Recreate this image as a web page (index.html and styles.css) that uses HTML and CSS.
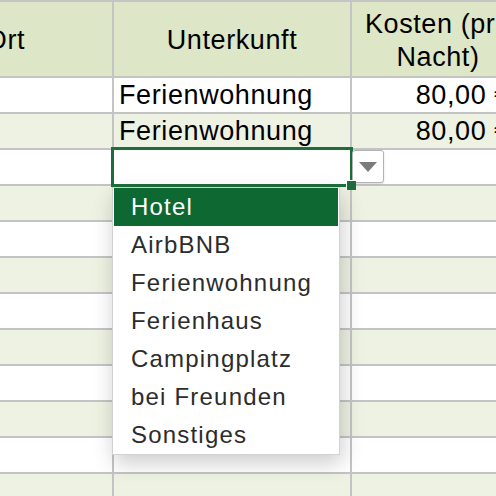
FILE: index.html
```html
<!DOCTYPE html>
<html lang="de">
<head>
<meta charset="utf-8">
<title>Unterkunft</title>
<link rel="stylesheet" href="styles.css">
</head>
<body>
<div class="sheet">
  <div class="cell head">Ort</div>
  <div class="cell head">Unterkunft</div>
  <div class="cell head">Kosten (pro Nacht)</div>

  <div class="cell"></div>
  <div class="cell text">Ferienwohnung</div>
  <div class="cell num">80,00 €</div>

  <div class="cell alt"></div>
  <div class="cell alt text">Ferienwohnung</div>
  <div class="cell alt num">80,00 €</div>

  <div class="cell"></div>
  <div class="cell active">
    <div class="selection"></div>
    <div class="handle"></div>
    <div class="dd-button"><span class="tri"></span></div>
    <ul class="dd-list">
      <li class="dd-item sel">Hotel</li>
      <li class="dd-item">AirbBNB</li>
      <li class="dd-item">Ferienwohnung</li>
      <li class="dd-item">Ferienhaus</li>
      <li class="dd-item">Campingplatz</li>
      <li class="dd-item">bei Freunden</li>
      <li class="dd-item">Sonstiges</li>
    </ul>
  </div>
  <div class="cell"></div>

  <div class="cell alt"></div><div class="cell alt"></div><div class="cell alt"></div>
  <div class="cell"></div><div class="cell"></div><div class="cell"></div>
  <div class="cell alt"></div><div class="cell alt"></div><div class="cell alt"></div>
  <div class="cell"></div><div class="cell"></div><div class="cell"></div>
  <div class="cell alt"></div><div class="cell alt"></div><div class="cell alt"></div>
  <div class="cell"></div><div class="cell"></div><div class="cell"></div>
  <div class="cell alt"></div><div class="cell alt"></div><div class="cell alt"></div>
  <div class="cell"></div><div class="cell"></div><div class="cell"></div>
  <div class="cell alt"></div><div class="cell alt"></div><div class="cell alt"></div>
</div>
</body>
</html>
```
FILE: styles.css
```css
html, body {
  margin: 0;
  padding: 0;
  background: #ffffff;
  overflow: hidden;
  width: 496px;
  height: 496px;
}

.sheet {
  display: grid;
  grid-template-columns: 213px 236px 172px;
  grid-template-rows: 74px;
  grid-auto-rows: 34px;
  gap: 2px;
  padding-top: 2px;
  margin-left: -101px;
  width: 625px;
  background: #c4c4c4;
  font-family: "Liberation Sans", Arial, sans-serif;
  font-size: 27px;
  letter-spacing: 0.6px;
  color: #000000;
}

.cell {
  background: #ffffff;
  line-height: 34px;
  white-space: nowrap;
  overflow: visible;
}

.cell.alt {
  background: #eef2e3;
}

.cell.head {
  background: #dde6c6;
  display: flex;
  align-items: center;
  justify-content: center;
  text-align: center;
  white-space: normal;
  line-height: 33px;
  padding: 3px 0 0;
}

.cell.text {
  padding-left: 5px;
}

.cell.num {
  text-align: right;
  padding-right: 14px;
}

.cell.active {
  position: relative;
  background: #ffffff;
}

.selection {
  position: absolute;
  left: -3px;
  top: -3px;
  width: 236px;
  height: 34px;
  border: 3px solid #1e6e3d;
  z-index: 2;
}

.handle {
  position: absolute;
  left: 232px;
  top: 30px;
  width: 9px;
  height: 9px;
  background: #1e6e3d;
  border-top: 1px solid #ffffff;
  border-left: 1px solid #ffffff;
  z-index: 3;
}

.dd-button {
  position: absolute;
  left: 238px;
  top: 0;
  width: 30px;
  height: 31px;
  background: #ffffff;
  border: 1px solid #b3b3b3;
  border-radius: 3px;
  box-shadow: 0 1px 2px rgba(0, 0, 0, 0.15);
  display: flex;
  align-items: center;
  justify-content: center;
  z-index: 2;
}

.tri {
  width: 0;
  height: 0;
  border-left: 9px solid transparent;
  border-right: 9px solid transparent;
  border-top: 10px solid #7b7b7b;
  margin-top: 1px;
}

.dd-list {
  position: absolute;
  left: -2px;
  top: 37px;
  width: 224px;
  margin: 0;
  padding: 0 1px;
  list-style: none;
  background: #ffffff;
  border: 1px solid #d2d2d2;
  box-shadow: 2px 8px 20px rgba(0, 0, 0, 0.2);
  z-index: 4;
}

.dd-item {
  height: 38px;
  line-height: 38px;
  padding-left: 17px;
  font-family: "Liberation Sans", Arial, sans-serif;
  font-size: 24px;
  letter-spacing: 1.2px;
  color: #2c2c2c;
}

.dd-item.sel {
  background: #0d6832;
  color: #ffffff;
}
```
